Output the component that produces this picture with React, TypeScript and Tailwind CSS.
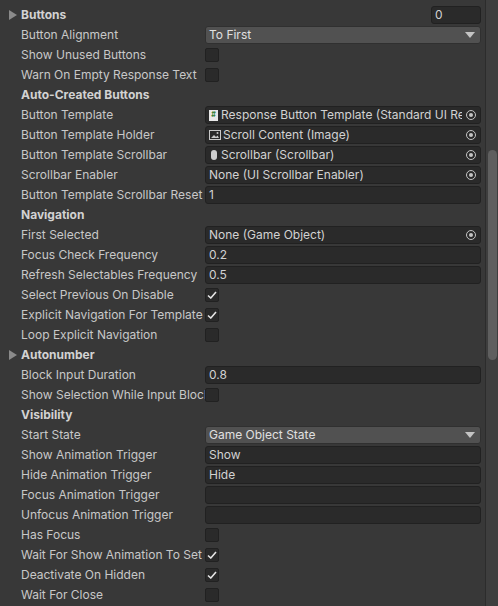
import React from "react";

type Row =
  | { k: "fold"; label: string; num?: string }
  | { k: "head"; label: string }
  | { k: "text"; label: string; value: string }
  | { k: "drop"; label: string; value: string }
  | { k: "obj"; label: string; value: string; icon?: "script" | "image" | "scroll" }
  | { k: "check"; label: string; on?: boolean };

const rows: Row[] = [
  { k: "fold", label: "Buttons", num: "0" },
  { k: "drop", label: "Button Alignment", value: "To First" },
  { k: "check", label: "Show Unused Buttons" },
  { k: "check", label: "Warn On Empty Response Text" },
  { k: "head", label: "Auto-Created Buttons" },
  { k: "obj", label: "Button Template", value: "Response Button Template (Standard UI Re", icon: "script" },
  { k: "obj", label: "Button Template Holder", value: "Scroll Content (Image)", icon: "image" },
  { k: "obj", label: "Button Template Scrollbar", value: "Scrollbar (Scrollbar)", icon: "scroll" },
  { k: "obj", label: "Scrollbar Enabler", value: "None (UI Scrollbar Enabler)" },
  { k: "text", label: "Button Template Scrollbar Reset", value: "1" },
  { k: "head", label: "Navigation" },
  { k: "obj", label: "First Selected", value: "None (Game Object)" },
  { k: "text", label: "Focus Check Frequency", value: "0.2" },
  { k: "text", label: "Refresh Selectables Frequency", value: "0.5" },
  { k: "check", label: "Select Previous On Disable", on: true },
  { k: "check", label: "Explicit Navigation For Template", on: true },
  { k: "check", label: "Loop Explicit Navigation" },
  { k: "fold", label: "Autonumber" },
  { k: "text", label: "Block Input Duration", value: "0.8" },
  { k: "check", label: "Show Selection While Input Block" },
  { k: "head", label: "Visibility" },
  { k: "drop", label: "Start State", value: "Game Object State" },
  { k: "text", label: "Show Animation Trigger", value: "Show" },
  { k: "text", label: "Hide Animation Trigger", value: "Hide" },
  { k: "text", label: "Focus Animation Trigger", value: "" },
  { k: "text", label: "Unfocus Animation Trigger", value: "" },
  { k: "check", label: "Has Focus" },
  { k: "check", label: "Wait For Show Animation To Set", on: true },
  { k: "check", label: "Deactivate On Hidden", on: true },
  { k: "check", label: "Wait For Close" },
];

const field = "h-[18px] min-w-0 bg-[#2a2a2a] border border-[#212121] rounded-[3px] flex items-center px-[3px] text-[#d2d2d2] overflow-hidden whitespace-nowrap";

function Target() {
  return (
    <div className="w-[18px] h-full flex items-center justify-center bg-[#2a2a2a] shrink-0">
      <div className="w-[10px] h-[10px] rounded-full border border-[#c4c4c4] flex items-center justify-center">
        <div className="w-[4px] h-[4px] rounded-full bg-[#c4c4c4]" />
      </div>
    </div>
  );
}

function Icon({ t }: { t: string }) {
  if (t === "script")
    return <div className="w-[9px] h-[11px] bg-[#e8e8e8] mr-[3px] shrink-0 flex items-center justify-center text-[7px] text-[#2e7d32] font-bold">#</div>;
  if (t === "image")
    return (
      <svg width="12" height="10" viewBox="0 0 12 10" className="mr-[2px] shrink-0">
        <rect x="0.5" y="0.5" width="11" height="9" fill="none" stroke="#c8c8c8" />
        <path d="M2 8 L5 5 L7 7 L8.5 5.5 L10 8 Z" fill="#c8c8c8" />
        <circle cx="8.5" cy="3" r="1" fill="#c8c8c8" />
      </svg>
    );
  return <div className="w-[6px] h-[10px] rounded-[3px] bg-[#cfcfcf] ml-[2px] mr-[4px] shrink-0" />;
}

function Value({ r }: { r: Row }) {
  if (r.k === "text") return <div className={field + " flex-1"}>{r.value}</div>;
  if (r.k === "drop")
    return (
      <div className="flex-1 min-w-0 h-[18px] bg-[#515151] border border-[#303030] rounded-[3px] flex items-center px-[3px] text-[#e0e0e0]">
        <span className="flex-1">{r.value}</span>
        <svg width="10" height="6" viewBox="0 0 10 6" className="mr-[2px]"><path d="M0 0 H10 L5 6 Z" fill="#c4c4c4" /></svg>
      </div>
    );
  if (r.k === "obj")
    return (
      <div className={field + " flex-1 !pr-0"}>
        {r.icon && <Icon t={r.icon} />}
        <span className="flex-1 min-w-0 overflow-hidden whitespace-nowrap">{r.value}</span>
        <Target />
      </div>
    );
  if (r.k === "check")
    return (
      <div className="w-[14px] h-[14px] bg-[#2a2a2a] border border-[#212121] rounded-[2px] flex items-center justify-center">
        {r.on && (
          <svg width="10" height="8" viewBox="0 0 10 8"><path d="M1 4.5 L3.8 7 L9 1" stroke="#e4e4e4" strokeWidth="1.6" fill="none" /></svg>
        )}
      </div>
    );
  return null;
}

export default function App() {
  return (
    <div className="w-[498px] h-[606px] bg-[#383838] flex overflow-hidden text-[12px]" style={{ fontFamily: "Inter, 'Noto Sans', sans-serif" }}>
      <div className="flex-1 min-w-0 flex flex-col pt-[5px] pr-[4px]">
        {rows.map((r, i) => (
          <div key={i} className="h-[20px] flex items-center shrink-0">
            {r.k === "fold" || r.k === "head" ? (
              <>
                <div className="w-[21px] flex justify-center pl-[4px] shrink-0">
                  {r.k === "fold" && (
                    <svg width="8" height="10" viewBox="0 0 8 10"><path d="M0 0 L8 5 L0 10 Z" fill="#8a8a8a" /></svg>
                  )}
                </div>
                <span className="flex-1 font-bold text-[#d2d2d2]">{r.label}</span>
                {r.k === "fold" && r.num && <div className={field + " w-[50px] shrink-0"}>{r.num}</div>}
              </>
            ) : (
              <>
                <div className="w-[205px] pl-[21px] pr-[1px] overflow-hidden whitespace-nowrap text-[#c8c8c8] shrink-0">{r.label}</div>
                <div className="flex-1 min-w-0 flex items-center">
                  <Value r={r} />
                </div>
              </>
            )}
          </div>
        ))}
      </div>
      <div className="w-[13px] shrink-0 border-l border-[#2c2c2c] bg-[#3e3e3e] flex flex-col pt-[150px]">
        <div className="mx-auto w-[9px] h-[210px] rounded-full bg-[#5f5f5f]" />
      </div>
    </div>
  );
}
